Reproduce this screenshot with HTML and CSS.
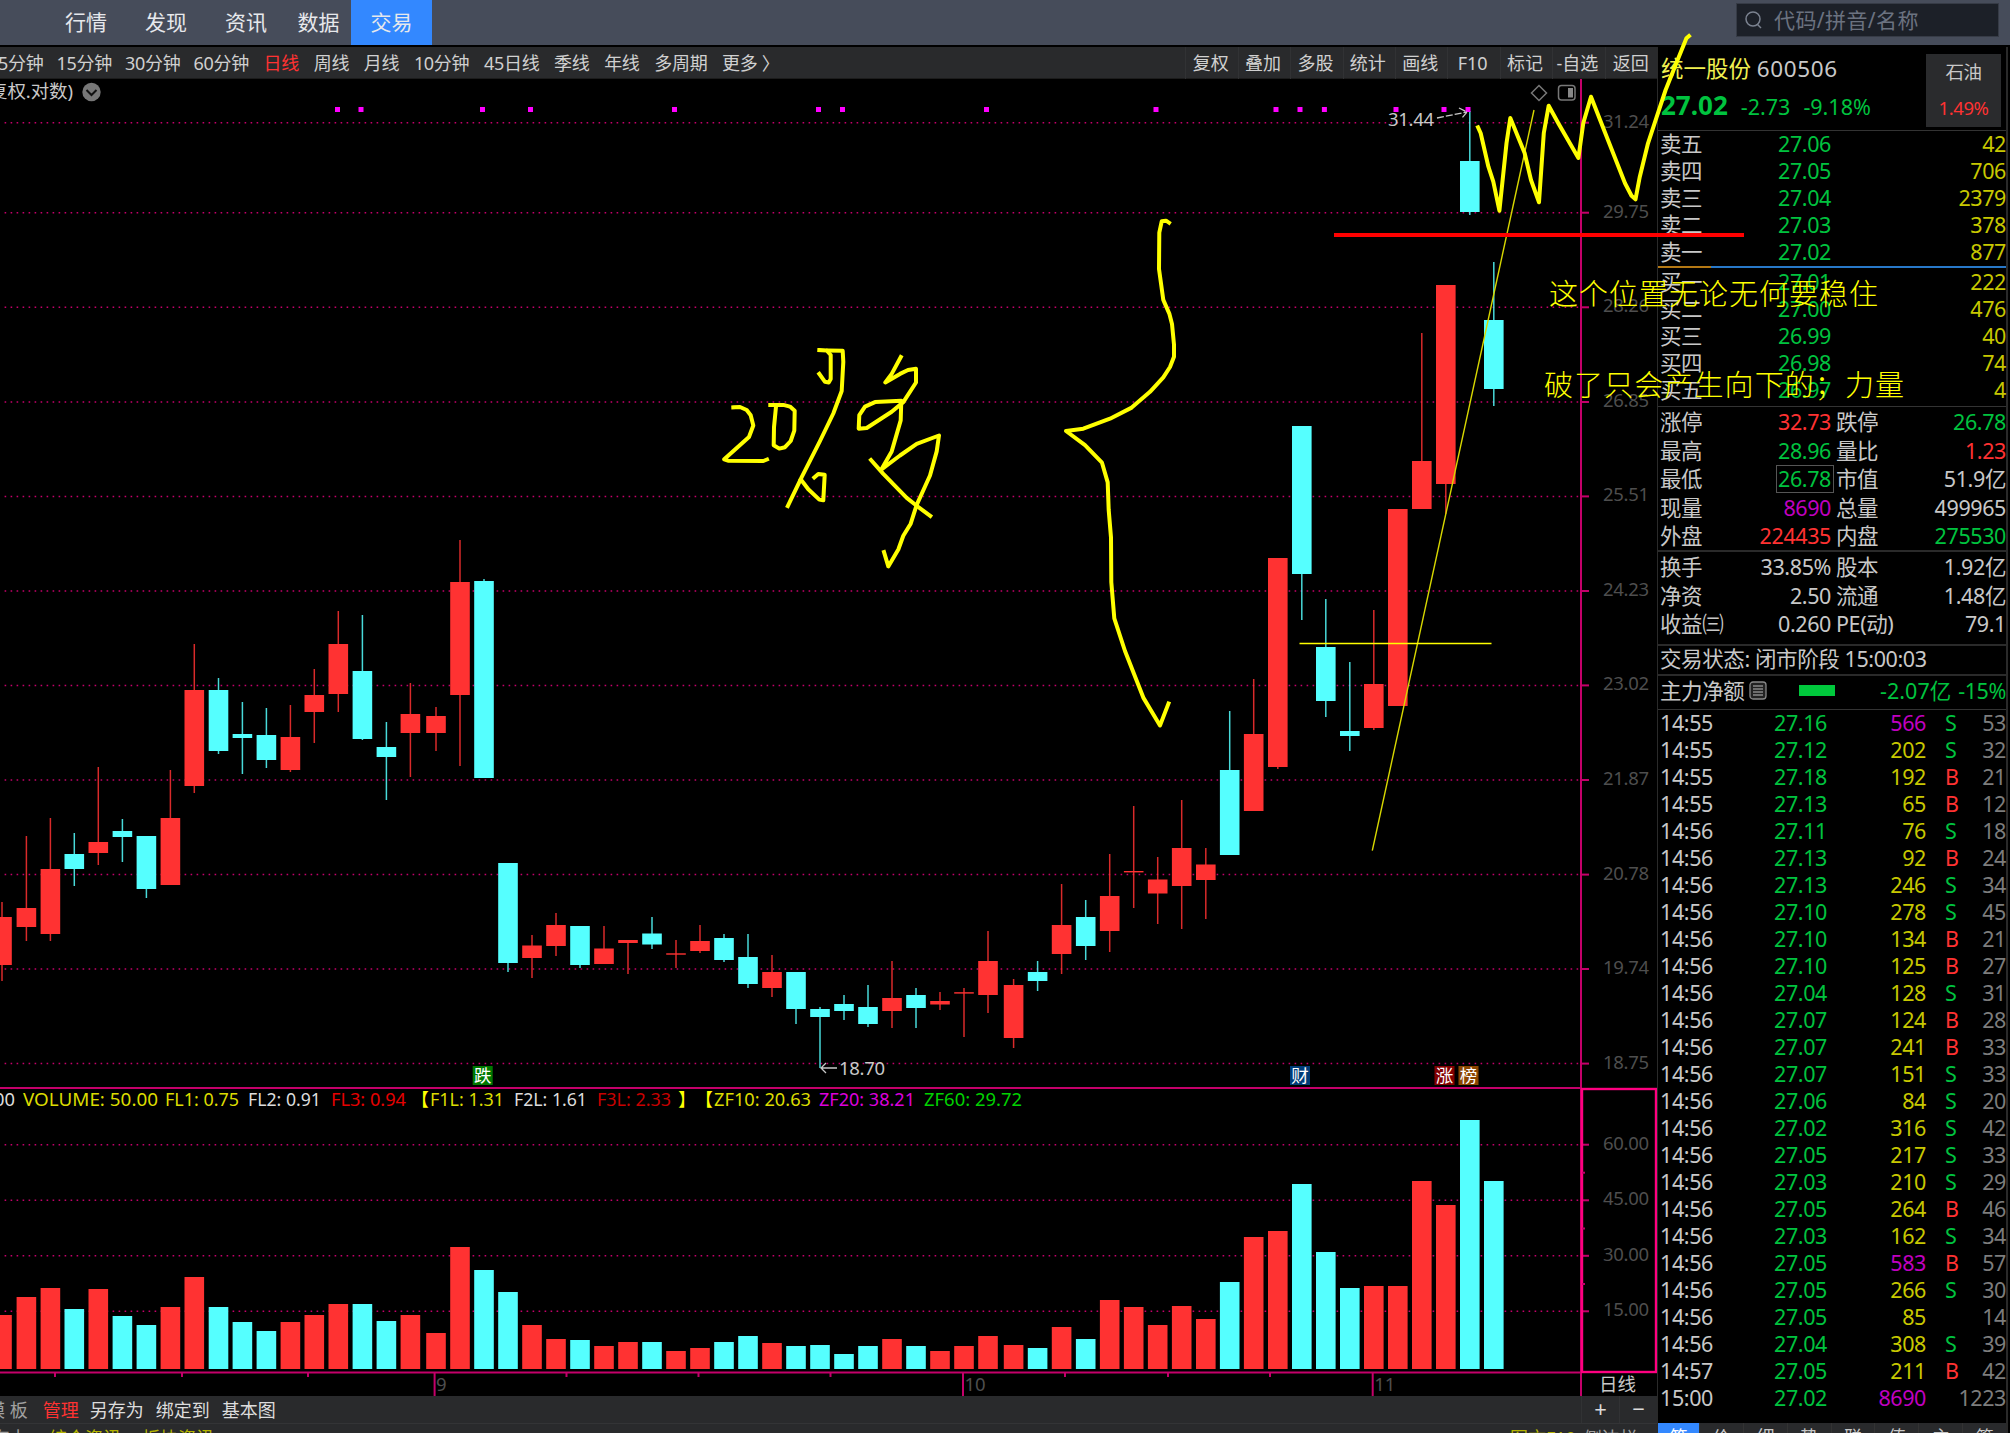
FILE: index.html
```html
<!DOCTYPE html>
<html lang="zh-CN">

<head>
    <meta charset="UTF-8">
    <meta name="viewport" content="width=device-width, initial-scale=1.0">
    <title>统一股份 600506</title>
    <link rel="stylesheet" href="styles.css">
</head>

<body>
    <header class="topbar">
        <nav class="menu">
            <span>行情</span>
            <span>发现</span>
            <span>资讯</span>
            <span>数据</span>
            <span class="active">交易</span>
        </nav>
        <div class="search">
            <svg width="20" height="22" viewBox="0 0 20 22">
                <circle cx="9" cy="10" r="7" />
                <path d="M13 15l4 4" />
            </svg>
            <span>代码/拼音/名称</span>
        </div>
    </header>

    <main class="main">
        <section class="left">
            <div class="toolbar">
                <div class="periods">
                    <span>5分钟</span>
                    <span>15分钟</span>
                    <span>30分钟</span>
                    <span>60分钟</span>
                    <span class="on">日线</span>
                    <span>周线</span>
                    <span>月线</span>
                    <span>10分钟</span>
                    <span>45日线</span>
                    <span>季线</span>
                    <span>年线</span>
                    <span>多周期</span>
                    <span>更多 〉</span>
                </div>
                <div class="tools">
                    <span>复权</span>
                    <span>叠加</span>
                    <span>多股</span>
                    <span>统计</span>
                    <span>画线</span>
                    <span>F10</span>
                    <span>标记</span>
                    <span>-自选</span>
                    <span>返回</span>
                </div>
            </div>

            <!-- viewBox starts at the chart's own offset so the annotations share its coordinates -->
            <svg class="chart" id="chart" width="1657" height="1317" viewBox="0 79 1657 1317"></svg>

            <div class="bottombar">
                <div class="templates">
                    <span class="dim">模 板</span>
                    <span class="on">管理</span>
                    <span>另存为</span>
                    <span>绑定到</span>
                    <span>基本图</span>
                </div>
                <div class="zoomer">
                    <span>+</span>
                    <span>−</span>
                </div>
            </div>
            <div class="infobar">
                <div class="news">
                    <span class="dim">东力</span>
                    <span>综合资讯</span>
                    <span>板块资讯</span>
                </div>
                <div class="side">
                    <span>图文F10</span>
                    <span class="dim">侧边栏»</span>
                </div>
            </div>
        </section>

        <aside class="quote">
            <div class="head">
                <div class="head-info">
                    <div class="name">统一股份 <span>600506</span></div>
                    <div class="price"><b>27.02</b><span>-2.73</span><span>-9.18%</span></div>
                </div>
                <div class="sector">
                    <span>石油</span>
                    <span class="red">1.49%</span>
                </div>
            </div>
            <div class="levels" id="sells"></div>
            <div class="ratio"><i></i></div>
            <div class="levels buys" id="buys"></div>
            <div class="stats">
                <div><span>涨停</span><span class="red">32.73</span><span>跌停</span><span class="green">26.78</span></div>
                <div><span>最高</span><span class="green">28.96</span><span>量比</span><span class="red">1.23</span></div>
                <div><span>最低</span><span class="green boxed">26.78</span><span>市值</span><span>51.9亿</span></div>
                <div><span>现量</span><span class="purple">8690</span><span>总量</span><span>499965</span></div>
                <div><span>外盘</span><span class="red">224435</span><span>内盘</span><span class="green">275530</span></div>
            </div>
            <div class="stats short">
                <div><span>换手</span><span>33.85%</span><span>股本</span><span>1.92亿</span></div>
                <div><span>净资</span><span>2.50</span><span>流通</span><span>1.48亿</span></div>
                <div><span>收益㈢</span><span>0.260</span><span>PE(动)</span><span>79.1</span></div>
            </div>
            <div class="state">交易状态: 闭市阶段 15:00:03</div>
            <div class="flow">
                <span>主力净额</span>
                <svg width="18" height="19" viewBox="0 0 18 19">
                    <rect x="1" y="1" width="16" height="17" rx="3" />
                    <path d="M4 5h10M4 8h10M4 11h10M4 14h10" />
                </svg>
                <i></i>
                <span class="green net">-2.07亿</span>
                <span class="green">-15%</span>
            </div>
            <div class="ticks" id="ticks"></div>
            <div class="quote-tabs">
                <span class="active">笔</span>
                <span>价</span>
                <span>细</span>
                <span>势</span>
                <span>联</span>
                <span>值</span>
                <span>主</span>
                <span>筹</span>
            </div>
        </aside>
    </main>

    <!-- hand-drawn notes on top of everything -->
    <svg class="notes" width="2010" height="1433" viewBox="0 0 2010 1433">
        <path class="trend" d="M1534 110L1372.3 850.7" />
        <path class="support" d="M1299.5 643.5H1491.5" />
        <path class="stop" d="M1334 235H1744" />
        <g class="pen">
            <path d="M1478 127.3L1480.7 133.3L1488.4 166.7L1493.3 181.7L1499.4 210.7L1506.5 143.3L1510.3 118L1524.6 153L1531 180L1539 202.3L1543.8 133L1548.7 105.7L1558.6 123.7L1578.4 158L1583.3 123L1591 96.7L1605.2 133L1625 183.3L1631.5 195.7L1635.5 199.3L1639.8 176.7L1648 143.3L1656.2 118.3L1665.6 90L1677.6 60L1686.4 38.3L1689 36" />
            <path d="M1169 222.7L1166 220.7L1161.7 221.3L1159.3 232.7L1159 268.9L1163.3 299.9L1169.3 313.6L1172 324L1174 344.6V356.7L1170 367L1163.3 377.3L1150 391.8L1131.7 407.6L1110 418.7L1083.3 428.7L1066 431L1085 445.2L1102 462.7L1107.7 482.4L1108.7 510L1111 537.5L1111.3 582.2L1114.3 618.4L1125 651L1143.3 697.6L1160 725.5L1168.5 703.5" />
            <path d="M733.3 407.3L740 407L746.7 410L750.7 415.2L753.3 425.5L749 437L724.2 459.3L728 460.7L763.3 461L767 459.5" />
            <path d="M770.3 404.9H783.3L790 406.6L794.7 410.7L794.3 430.7L790.7 441L785 447.2L779.3 448.6L773.7 445.2L774 427.3L776 406.6" />
            <path d="M819.3 350.1L826.7 350.5L830.7 355V379L828.7 382.5L825 381.8L819.3 373.9" />
            <path d="M828.3 350.5L842.7 350.8L843.3 361.8L841.7 391L833.3 413.5L820 441L801.7 477.2L787.8 506" />
            <path d="M801 479.6L808.3 489.3L819.3 499.6L823.3 500.3L824.7 474.8L818.3 474.1L814.3 477.5" />
            <path d="M900.8 357L891.7 373.9L885.3 382.5L900 373.9L908 370L916 368.7V382.5L903.3 402.1L891.7 411.8L866.7 428L858.7 428.7L859.3 415.2L865 406.6L875 402.1L901.3 400.8L900.7 420.4L891.7 451.4L881.5 469.3L900 455.5L916.7 443.8L939 435.5L936.7 451.4L930 475.5L916.7 504.8L910.7 523.7L903.3 535.7L898.3 549.5L888.3 566.4L884 552" />
            <path d="M871 460L883.3 473.8L906.7 497.9L916.7 505.8L930.3 516" />
        </g>
        <text x="1549" y="305" textLength="329">这个位置无论无何要稳住</text>
        <text x="1544" y="396" textLength="360">破了只会产生向下的；力量</text>
    </svg>

    <script src="script.js"></script>
</body>

</html>
```

FILE: styles.css
```css
* {
    box-sizing: border-box;
}

body {
    margin: 0;
    width: 2010px;
    height: 1433px;
    overflow: hidden;
    position: relative;
    background: #000;
    color: #c8c8c8;
    font-family: "Noto Sans", "Noto Sans CJK SC", sans-serif;
    white-space: nowrap;
}

.red { color: #ff3232; }
.green { color: #00c33f; }
.yellow { color: #c8c800; }
.purple { color: #c000c0; }
.gray { color: #7d7d7d; }

/* top bar */
.topbar {
    display: flex;
    justify-content: space-between;
    height: 45px;
    padding-right: 11px;
    background: #464c5a;
}

.menu {
    display: flex;
    padding-left: 46px;
    font-size: 21px;
    line-height: 45px;
    color: #e6e8ec;
}

.menu span {
    width: 80px;
    text-align: center;
}

.menu span:nth-child(4) {
    width: 65px;
}

.menu .active {
    width: 81px;
    background: #3388ff;
}

.search {
    display: flex;
    align-items: center;
    width: 263px;
    height: 34px;
    margin-top: 3px;
    padding-left: 7px;
    gap: 10px;
    background: #1c2028;
    border: 1px solid #363b46;
    color: #6b7280;
    font-size: 21px;
    line-height: 34px;
    letter-spacing: 0.4px;
}

.search svg {
    fill: none;
    stroke: #7b8290;
    stroke-width: 1.5;
}

.main {
    display: flex;
    height: 1386px;
    margin-top: 2px;
    overflow: hidden;
}

/* chart side */
.left {
    width: 1657px;
    overflow: hidden;
}

.toolbar {
    display: flex;
    justify-content: space-between;
    height: 32px;
    border-bottom: 1px solid #1c1c1c;
    background: #292a2c;
    font-size: 18px;
    line-height: 32px;
    color: #d0d0d0;
}

.periods {
    display: flex;
    gap: 14.7px;
    margin-left: -2px;
    letter-spacing: -0.3px;
}

.periods span:nth-child(-n+3) {
    margin-right: -1.6px;
}

.periods .on,
.templates .on {
    color: #ff3232;
}

.tools {
    display: grid;
    grid-template-columns: repeat(9, 52.4px);
    text-align: center;
}

.tools span {
    padding-right: 3px;
    border-left: 1px solid #313234;
}

.tools span:last-child {
    padding-right: 1px;
}

.chart {
    display: block;
}

.chart text {
    font-size: 18.5px;
    fill: #c8c8c8;
}

.chart .scale {
    fill: #4e4e4e;
    text-anchor: end;
}

.chart .month {
    fill: #4e4e4e;
}

.chart .mark {
    fill: #fff;
    font-size: 17.5px;
}

.chart .info {
    font-size: 18px;
}

.grid {
    stroke: #c4006a;
    stroke-width: 1.5;
    stroke-dasharray: 1.6 4.4;
}

.axis {
    fill: none;
    stroke: #c4006a;
    stroke-width: 2;
}

.axis-box {
    fill: none;
    stroke: #ff0080;
    stroke-width: 2.4;
}

.icon {
    fill: none;
    stroke: #777;
    stroke-width: 1.5;
}

.arrow {
    fill: none;
    stroke: #c8c8c8;
    stroke-width: 1.3;
}

.bottombar,
.infobar {
    display: flex;
    justify-content: space-between;
    height: 28px;
    background: #292a2c;
    font-size: 18px;
    line-height: 29px;
    color: #dcdcdc;
}

.bottombar {
    border-bottom: 1px solid #333436;
}

.templates {
    display: flex;
    gap: 12px;
    margin-left: -13px;
}

.templates .on {
    margin: 0 -1px 0 3px;
}

.dim {
    color: #a0a0a0;
}

.zoomer {
    display: flex;
    width: 76px;
    font-size: 22px;
    line-height: 25px;
    text-align: center;
}

.zoomer span {
    flex: 1;
    border-left: 1px solid #313234;
}

.infobar {
    color: #b4b400;
}

.news,
.side {
    display: flex;
    gap: 21px;
}

.news {
    margin-left: -8px;
}

.side {
    gap: 8px;
    margin-right: 10px;
}

/* quote side */
.quote {
    display: flex;
    flex-direction: column;
    width: 351px;
    border: solid #2a2a2a;
    border-width: 0 2px 0 1px;
    font-size: 21.5px;
    letter-spacing: -0.4px;
}

.quote > div {
    flex-shrink: 0;
}

.head {
    display: flex;
    justify-content: space-between;
    height: 84px;
    padding: 7px 5px 0 3px;
    border-bottom: 1px solid #333;
}

.name {
    font-size: 22.5px;
    line-height: 30px;
    color: #f0f050;
    letter-spacing: 0;
}

.name span {
    color: #c8c8c8;
    letter-spacing: 0.6px;
}

.price {
    display: flex;
    align-items: baseline;
    gap: 13px;
    line-height: 42px;
    color: #00c33f;
    letter-spacing: 0;
}

.price b {
    font-size: 26px;
}

.sector {
    display: flex;
    flex-direction: column;
    width: 75px;
    height: 73px;
    background: #2a2b2d;
    font-size: 18.5px;
    line-height: 36px;
    text-align: center;
}

.levels {
    line-height: 25px;
}

.levels div {
    display: grid;
    grid-template-columns: 70px 101px 1fr;
    height: 27px;
    padding: 0 0 0 2px;
    text-align: right;
}

.levels div span:first-child {
    text-align: left;
}

.ratio {
    height: 2px;
    background: #2878c8;
}

.ratio i {
    display: block;
    width: 53px;
    height: 2px;
    background: #b47814;
}

.buys {
    height: 139px;
    border-bottom: 1px solid #333;
    line-height: 27px;
}

.stats {
    height: 145px;
    padding-top: 1px;
    border-bottom: 2px solid #2a2a2a;
}

.stats.short {
    height: 94px;
}

.stats div {
    display: grid;
    grid-template-columns: 70px 101px 70px 1fr;
    height: 28.6px;
    padding: 0 0 0 2px;
    line-height: 27.2px;
    text-align: right;
}

.stats div span:nth-child(odd) {
    text-align: left;
}

.stats div span:nth-child(3) {
    padding-left: 5px;
}

.stats .boxed {
    justify-self: end;
    height: 28px;
    margin-right: -3px;
    padding: 0 2px 0 1px;
    border: 1px solid #555;
    line-height: 25.2px;
}

.state {
    height: 30px;
    padding-left: 2px;
    border-bottom: 2px solid #2a2a2a;
    line-height: 26px;
}

.flow {
    display: flex;
    align-items: center;
    height: 34px;
    padding: 0 0 4px 2px;
    border-bottom: 1px solid #333;
    line-height: 29px;
}

.flow svg {
    margin: 0 32px 0 5px;
    fill: #222;
    stroke: #888;
    stroke-width: 1.3;
}

.flow i {
    width: 36px;
    height: 11px;
    background: #00c83c;
}

.flow .net {
    margin: 0 7px 0 auto;
    letter-spacing: 0;
}

.ticks {
    height: 713px;
}

.ticks div {
    display: grid;
    grid-template-columns: 70px 97px 99px 27px 1fr;
    height: 27px;
    padding: 0 0 0 2px;
    line-height: 26px;
    text-align: right;
}

.ticks div span:first-child {
    text-align: left;
}

.ticks .side-flag {
    padding-left: 19px;
    text-align: left;
}

.quote-tabs {
    display: grid;
    grid-template-columns: 41px repeat(7, 1fr);
    height: 28px;
    background: #292a2c;
    font-size: 18px;
    line-height: 28px;
    text-align: center;
}

.quote-tabs span + span {
    border-left: 1px solid #333;
}

.quote-tabs .active {
    background: #3388ff;
    color: #fff;
}

/* drawings */
.notes {
    position: absolute;
    top: 0;
    left: 0;
    pointer-events: none;
}

.notes path {
    fill: none;
    stroke: #ff0;
}

.notes .pen path {
    stroke-width: 4;
    stroke-linejoin: round;
    stroke-linecap: square;
}

.notes .trend {
    stroke: #d8d800;
    stroke-width: 1.4;
}

.notes .support {
    stroke-width: 1.4;
}

.notes .stop {
    stroke: #f00;
    stroke-width: 4;
}

.notes text {
    fill: #ff0;
    font-size: 29px;
    font-weight: 300;
    font-family: "Noto Sans CJK SC", sans-serif;
}
```

FILE: script.js
```js
const RED = "#ff3232";
const CYAN = "#55ffff";

// x, colour, high, body top, body bottom, low, volume top
const bars = [
    [2, "r", 902, 917, 965, 981, 1315],
    [26.4, "r", 836, 908, 927, 941, 1297],
    [50.4, "r", 818, 869, 934, 941, 1288],
    [74.3, "c", 833, 854, 869, 886, 1309],
    [98.3, "r", 767, 842, 853, 865, 1289],
    [122.4, "c", 819, 831, 837, 862, 1316],
    [146.4, "c", 836, 836, 889, 898, 1325],
    [170.4, "r", 770, 818, 885, 885, 1307],
    [194.3, "r", 644, 690, 786, 793, 1277],
    [218.5, "c", 678, 690, 751, 754, 1307],
    [242.4, "c", 702, 734, 738, 774, 1322],
    [266.4, "c", 708, 735, 760, 768, 1331],
    [290.4, "r", 705, 737, 770, 772, 1322],
    [314.3, "r", 669, 695, 712, 743, 1315],
    [338.3, "r", 611, 644, 694, 712, 1304],
    [362.4, "c", 615, 671, 739, 740, 1304],
    [386.4, "c", 722, 747, 757, 800, 1321],
    [410.4, "r", 683, 714, 733, 777, 1315],
    [436, "r", 707, 716, 733, 751, 1333],
    [460, "r", 540, 582, 695, 766, 1247],
    [484, "c", 579, 581, 778, 778, 1270],
    [508, "c", 863, 863, 963, 972, 1292],
    [532, "r", 935, 945.5, 958, 978, 1325],
    [556, "r", 913, 925, 946, 956, 1339],
    [580, "c", 926, 926, 965, 968, 1340],
    [604, "r", 926, 948.5, 964, 964, 1346],
    [628, "r", 940, 940, 943, 974, 1342],
    [652, "c", 917, 933.5, 944.5, 949, 1342],
    [676, "r", 940, 953.3, 954.7, 968, 1351],
    [700, "r", 925, 941, 951, 953, 1348],
    [724, "c", 934, 938, 960, 962, 1342],
    [748, "c", 934, 957, 984, 988, 1336],
    [772, "r", 955, 972, 988, 997, 1343],
    [796, "c", 972, 972, 1009, 1024, 1346],
    [820, "c", 1007, 1009, 1017, 1068, 1345],
    [844, "c", 995, 1004, 1011, 1020, 1354],
    [868, "c", 985, 1007, 1024, 1027, 1346],
    [892, "r", 961, 998, 1011, 1028, 1339],
    [916, "c", 988, 995, 1008, 1028, 1346],
    [940, "r", 992, 1001, 1004.5, 1010, 1351],
    [964, "r", 988, 992.2, 993.6, 1037, 1346],
    [988, "r", 931, 961, 995, 1013, 1336],
    [1013.6, "r", 979, 985, 1038, 1048, 1345],
    [1037.6, "c", 961, 972, 981, 991, 1348],
    [1061.6, "r", 884, 925, 954, 974, 1327],
    [1085.7, "c", 900, 917, 946, 960, 1339],
    [1109.7, "r", 854, 896, 931, 952, 1300],
    [1133.7, "r", 806, 871, 872.4, 908, 1307],
    [1157.7, "r", 857, 879.5, 893.5, 924, 1325],
    [1181.7, "r", 800, 848, 886, 929, 1306],
    [1205.8, "r", 848, 864.5, 880, 919, 1319],
    [1229.7, "c", 711, 770, 855, 855, 1282],
    [1253.7, "r", 679, 734, 811, 811, 1237],
    [1277.8, "r", 558, 558, 767, 769, 1231],
    [1301.8, "c", 426, 426, 574, 620, 1184],
    [1325.8, "c", 599, 647, 701, 717, 1252],
    [1349.8, "c", 662, 731, 736, 751, 1288],
    [1373.8, "r", 610, 684, 728, 730, 1286],
    [1397.8, "r", 509, 509, 706, 706, 1286],
    [1421.8, "r", 333, 461, 509, 509, 1181],
    [1445.8, "r", 285, 285, 484, 514, 1205],
    [1469.8, "c", 111, 161, 212, 215, 1120],
    [1493.8, "c", 262, 320, 389, 406, 1181]
];

const priceScale = [
    [122.7, "31.24"], [212.7, "29.75"], [307.3, "28.26"], [402, "26.85"], [496.4, "25.51"], [591, "24.23"],
    [685.4, "23.02"], [780, "21.87"], [874.6, "20.78"], [969, "19.74"], [1063.6, "18.75"]
];
const volumeScale = [[1144.7, "60.00"], [1200.3, "45.00"], [1255.8, "30.00"], [1311.3, "15.00"]];
const signals = [337.5, 361, 482.5, 530.5, 674.5, 818.5, 842.5, 986.5, 1156, 1276, 1300, 1324.4, 1396, 1444, 1468];
const marks = [[472.7, "跌", "#007800"], [1290, "财", "#003c78"], [1434.5, "涨", "#820000"], [1458.5, "榜", "#8c4600"]];

// x, width, text, colour
const info = [
    [-6, 21, "00", "#dcdcdc"],
    [23, 135, "VOLUME: 50.00", "#dcdc00"],
    [165, 74, "FL1: 0.75", "#dcdc00"],
    [248, 73, "FL2: 0.91", "#dcdcdc"],
    [331, 75, "FL3: 0.94", "#e60000"],
    [430, 74, "F1L: 1.31", "#dcdc00"],
    [514, 73, "F2L: 1.61", "#dcdcdc"],
    [597, 74, "F3L: 2.33", "#c80000"],
    [714, 97, "ZF10: 20.63", "#dcdc00"],
    [819, 96, "ZF20: 38.21", "#dc00dc"],
    [924, 98, "ZF60: 29.72", "#00d200"]
];

let svg = "";

priceScale.concat(volumeScale).forEach(([y, label]) => {
    svg += `<path class="grid" d="M4.6 ${y}H1580"/><path class="axis" d="M1581 ${y}h8"/>`;
    svg += `<text class="scale" x="1649" y="${y + 5}" textLength="46">${label}</text>`;
});

bars.forEach(([x, c, high, top, bottom, low, vol]) => {
    const color = c === "r" ? RED : CYAN;
    svg += `<path d="M${x} ${high}V${low}" stroke="${color}" stroke-width="1.5" opacity="0.85"/>`;
    svg += `<rect x="${x - 9.8}" y="${top}" width="19.6" height="${bottom - top}" fill="${color}"/>`;
    svg += `<rect x="${x - 9.8}" y="${vol}" width="19.6" height="${1369 - vol}" fill="${color}"/>`;
});

signals.forEach(x => {
    svg += `<rect x="${x - 2.5}" y="107" width="5" height="5" fill="#ff00ff"/>`;
});

marks.forEach(([x, label, color]) => {
    svg += `<rect x="${x}" y="1066" width="20" height="19" fill="${color}"/>`;
    svg += `<text class="mark" x="${x + 1.2}" y="1082">${label}</text>`;
});

info.forEach(([x, w, label, color]) => {
    svg += `<text class="info" x="${x}" y="1106" textLength="${w}" lengthAdjust="spacingAndGlyphs" style="fill:${color}">${label}</text>`;
});
[[411, "【"], [678, "】"], [695, "【"]].forEach(([x, label]) => {
    svg += `<text class="info" x="${x}" y="1106" style="fill:#ff0">${label}</text>`;
});

// frame
svg += `<path class="axis" d="M1581 79V1396M0 1088H1581M0 1372.6H1581"/>`;
svg += `<rect class="axis-box" x="1582" y="1089" width="74" height="283"/>`;
[1172.7, 1228.5, 1284].forEach(y => svg += `<path class="axis" d="M1582 ${y}h3"/>`);
[55, 182, 308, 566.5, 698.5, 830.5, 1065, 1168, 1270].forEach(x => svg += `<path class="axis" d="M${x} 1373v4"/>`);
[[434.6, "9"], [963, "10"], [1372.7, "11"]].forEach(([x, label]) => {
    svg += `<path class="axis" d="M${x} 1373v23"/><text class="month" x="${x + 1.5}" y="1391">${label}</text>`;
});
svg += `<text x="1599" y="1391">日线</text>`;

// high and low labels
svg += `<text x="1388" y="126" textLength="46">31.44</text><path class="arrow" d="M1437 118L1467 112M1459 108L1467 112L1462 118" stroke-dasharray="7 2"/>`;
svg += `<text x="839" y="1075" textLength="46">18.70</text><path class="arrow" d="M821 1068H837M826 1063L821 1068L826 1073"/>`;

// title and icons
svg += `<text x="-11" y="98" textLength="84">复权.对数)</text>`;
svg += `<circle cx="91.5" cy="92" r="9.2" fill="#777"/><path d="M86.5 90l5 5l5-5" fill="none" stroke="#111" stroke-width="2"/>`;
svg += `<path class="icon" d="M1539 85.5L1546.5 93L1539 100.5L1531.5 93Z"/>`;
svg += `<rect class="icon" x="1558.5" y="85.5" width="16.5" height="14.5" rx="3"/><rect x="1568" y="88" width="5" height="9.5" fill="#888"/>`;

document.getElementById("chart").innerHTML = svg;

function levels(id, rows) {
    document.getElementById(id).innerHTML = rows.map(([name, price, count]) =>
        `<div><span>${name}</span><span class="green">${price}</span><span class="yellow">${count}</span></div>`).join("");
}

levels("sells", [["卖五", "27.06", 42], ["卖四", "27.05", 706], ["卖三", "27.04", 2379], ["卖二", "27.03", 378], ["卖一", "27.02", 877]]);
levels("buys", [["买一", "27.01", 222], ["买二", "27.00", 476], ["买三", "26.99", 40], ["买四", "26.98", 74], ["买五", "26.97", 4]]);

const ticks = `14:55 27.16 566 S 53
14:55 27.12 202 S 32
14:55 27.18 192 B 21
14:55 27.13 65 B 12
14:56 27.11 76 S 18
14:56 27.13 92 B 24
14:56 27.13 246 S 34
14:56 27.10 278 S 45
14:56 27.10 134 B 21
14:56 27.10 125 B 27
14:56 27.04 128 S 31
14:56 27.07 124 B 28
14:56 27.07 241 B 33
14:56 27.07 151 S 33
14:56 27.06 84 S 20
14:56 27.02 316 S 42
14:56 27.05 217 S 33
14:56 27.03 210 S 29
14:56 27.05 264 B 46
14:56 27.03 162 S 34
14:56 27.05 583 B 57
14:56 27.05 266 S 30
14:56 27.05 85 - 14
14:56 27.04 308 S 39
14:57 27.05 211 B 42
15:00 27.02 8690 - 1223`;

document.getElementById("ticks").innerHTML = ticks.split("\n").map(line => {
    const [time, price, vol, flag, count] = line.split(" ");
    const volClass = vol > 500 ? "purple" : "yellow";
    const flagClass = flag === "B" ? "red" : "green";
    return `<div><span>${time}</span><span class="green">${price}</span><span class="${volClass}">${vol}</span>` +
        `<span class="side-flag ${flagClass}">${flag === "-" ? "" : flag}</span><span class="gray">${count}</span></div>`;
}).join("");
```
